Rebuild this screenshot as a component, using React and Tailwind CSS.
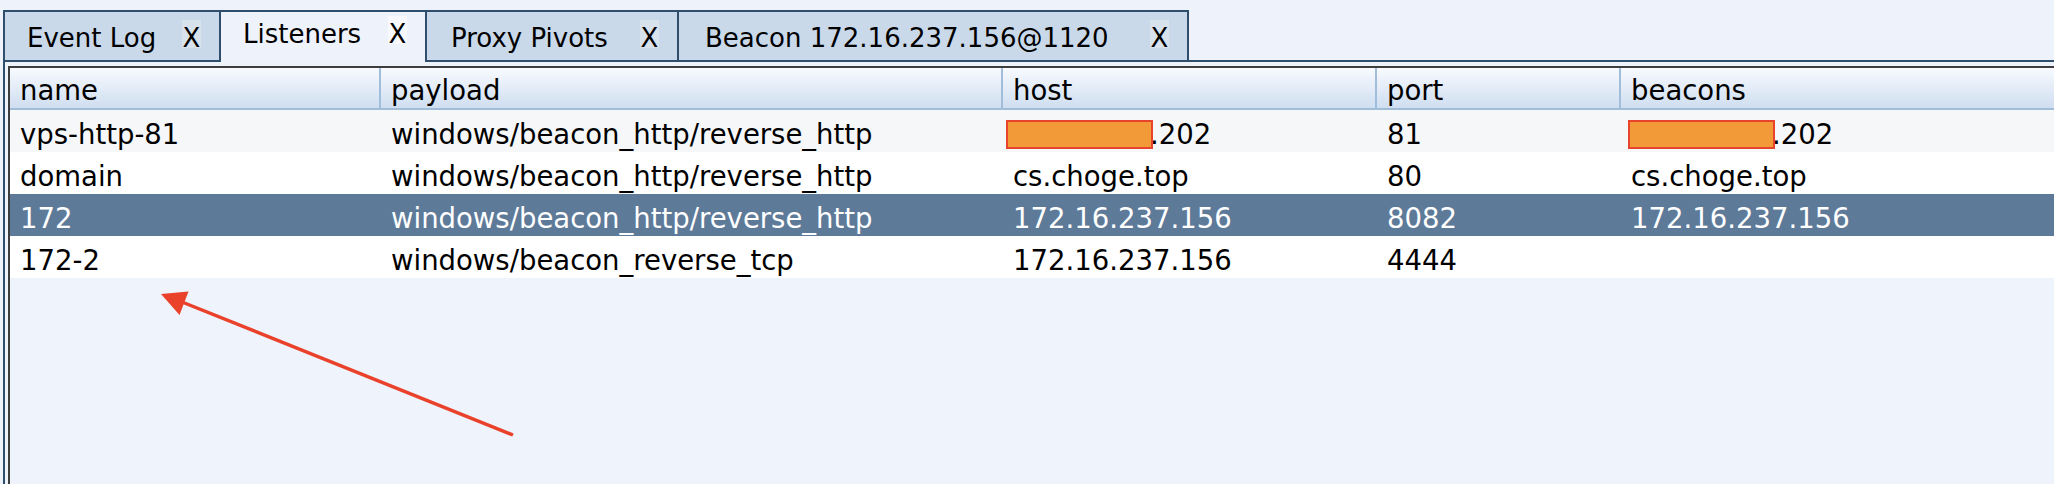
import React from 'react';

const tabs = [
  { label: 'Event Log', width: 218, pl: 22 },
  { label: 'Listeners', width: 208, pl: 22, active: true },
  { label: 'Proxy Pivots', width: 254, pl: 24 },
  { label: 'Beacon 172.16.237.156@1120', width: 512, pl: 26 },
];

const columns = [
  { key: 'name', label: 'name', width: 'w-[369px]' },
  { key: 'payload', label: 'payload', width: 'w-[622px]' },
  { key: 'host', label: 'host', width: 'w-[374px]' },
  { key: 'port', label: 'port', width: 'w-[244px]' },
  { key: 'beacons', label: 'beacons', width: 'flex-1' },
];

const rows = [
  { name: 'vps-http-81', payload: 'windows/beacon_http/reverse_http', host: 'redacted', port: '81', beacons: 'redacted', bg: 'bg-[#f6f7f9]' },
  { name: 'domain', payload: 'windows/beacon_http/reverse_http', host: 'cs.choge.top', port: '80', beacons: 'cs.choge.top', bg: 'bg-white' },
  { name: '172', payload: 'windows/beacon_http/reverse_http', host: '172.16.237.156', port: '8082', beacons: '172.16.237.156', selected: true },
  { name: '172-2', payload: 'windows/beacon_reverse_tcp', host: '172.16.237.156', port: '4444', beacons: '', bg: 'bg-white' },
];

// orange box somebody painted over the public ip
const Redacted = ({ shift }) => (
  <span className="inline-flex items-center">
    <span className={`relative z-10 inline-block h-[29px] w-[147px] border-2 border-[#e8432c] bg-[#f29a38] ${shift}`} />
    <span className="-ml-[3px]">.202</span>
  </span>
);

const Tab = ({ label, width, pl, active }) => (
  <div
    className={`-ml-[2px] flex h-[52px] shrink-0 items-start border-[#2f4d6c] first:ml-0 ${
      active ? 'border-x-2 border-t-2 bg-[#eef2fa]' : 'border-2 bg-[#c9d9ea]'
    }`}
    style={{ width }}
  >
    <span className={`leading-[30px] ${active ? 'mt-[7px]' : 'mt-[11px]'}`} style={{ paddingLeft: pl }}>
      {label}
    </span>
    <span
      className={`ml-auto mr-[18px] h-[28px] w-[19px] text-center leading-[36px] ${
        active ? 'mt-[4px] bg-[#f7f9fc]' : 'mt-[8px] bg-[#d7e2ed]'
      }`}
    >
      X
    </span>
  </div>
);

export default function App() {
  return (
    <div className="relative h-[484px] w-[2054px] overflow-hidden bg-[#eef2fa] pt-[10px] font-['DejaVu_Sans',sans-serif] text-black">
      <div className="flex pl-[3px] text-[26px]">
        {tabs.map((t) => (
          <Tab key={t.label} {...t} />
        ))}
        <div className="flex-1 border-b-2 border-[#2f4d6c]" />
      </div>

      <div className="ml-[3px] h-full border-l-2 border-[#2f4d6c] pl-[3px] pt-[4px]">
        <div className="h-full border-l-2 border-t-2 border-[#3d3d3d] bg-[#eff3fb] text-[27.5px]">
          <div className="flex h-[42px] border-b-2 border-[#a0bdd9] bg-linear-to-b from-[#f8faff] to-[#cfdef0]">
            {columns.map((c, i) => (
              <div
                key={c.key}
                className={`${c.width} h-[40px] pl-[10px] leading-[44px] ${i > 0 ? 'border-l-2 border-[#a0bdd9]' : ''}`}
              >
                {c.label}
              </div>
            ))}
          </div>

          {rows.map((r) => (
            <div key={r.name} className={`flex h-[42px] leading-[48px] ${r.selected ? 'bg-[#5e7a99] text-white' : r.bg}`}>
              {columns.map((c, i) => (
                <div key={c.key} className={`${c.width} ${i > 0 ? 'pl-[12px]' : 'pl-[10px]'} whitespace-nowrap`}>
                  {r[c.key] === 'redacted' ? (
                    <Redacted shift={c.key === 'host' ? '-ml-[7px]' : '-ml-[3px]'} />
                  ) : (
                    r[c.key]
                  )}
                </div>
              ))}
            </div>
          ))}
        </div>
      </div>

      {/* red annotation arrow */}
      <svg className="pointer-events-none absolute inset-0" width="2054" height="484">
        <line x1="513" y1="435" x2="182" y2="302" stroke="#ea412b" strokeWidth="3.5" />
        <polygon points="161,294 188.5,291.5 179.5,315" fill="#ea412b" />
      </svg>
    </div>
  );
}
